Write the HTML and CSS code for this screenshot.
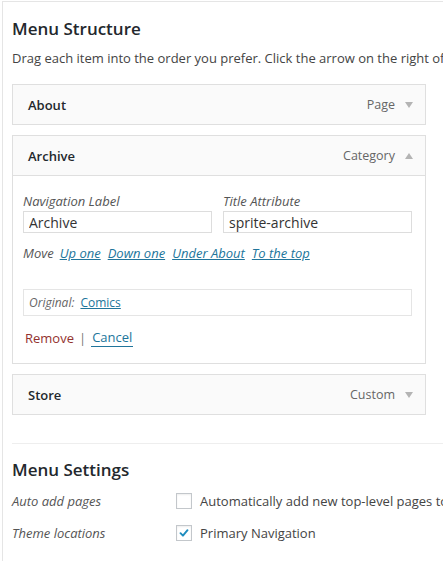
FILE: index.html
```html
<!DOCTYPE html>
<html>
<head>
<meta charset="utf-8">
<link rel="stylesheet" href="styles.css">
</head>
<body>
<div class="panel">
  <h2 class="title">Menu Structure</h2>
  <p class="desc">Drag each item into the order you prefer. Click the arrow on the right of</p>
  <ul class="menu">
    <li class="item">
      <div class="item-bar"><span class="item-title">About</span><span class="item-type">Page</span><span class="arrow down"></span></div>
    </li>
    <li class="item open">
      <div class="item-bar"><span class="item-title">Archive</span><span class="item-type">Category</span><span class="arrow up"></span></div>
      <div class="item-body">
        <div class="fields">
          <label class="field"><span class="label">Navigation Label</span><input class="input" type="text" value="Archive"></label>
          <label class="field"><span class="label">Title Attribute</span><input class="input" type="text" value="sprite-archive"></label>
        </div>
        <div class="move"><span class="move-label">Move</span><a class="link">Up one</a><a class="link">Down one</a><a class="link">Under About</a><a class="link">To the top</a></div>
        <div class="original"><span class="orig-label">Original:</span><a class="link">Comics</a></div>
        <div class="actions"><a class="remove">Remove</a><span class="sep">|</span><a class="cancel">Cancel</a></div>
      </div>
    </li>
    <li class="item">
      <div class="item-bar"><span class="item-title">Store</span><span class="item-type">Custom</span><span class="arrow down"></span></div>
    </li>
  </ul>
  <div class="settings">
    <h3 class="title">Menu Settings</h3>
    <div class="row"><span class="row-label">Auto add pages</span><span class="check"></span><span class="row-text">Automatically add new top-level pages to</span></div>
    <div class="row"><span class="row-label">Theme locations</span><span class="check checked"><svg viewBox="0 0 16 16" width="16" height="16"><path d="M4 8.2 L6.8 11 L12 4.8" fill="none" stroke="#1e8cbe" stroke-width="2.2" stroke-linecap="round" stroke-linejoin="round"/></svg></span><span class="row-text">Primary Navigation</span></div>
  </div>
</div>
</body>
</html>
```

FILE: styles.css
```css
html, body {
  margin: 0;
  padding: 0;
  background: #fff;
  overflow: hidden;
}
body {
  font-family: "Open Sans", "Liberation Sans", sans-serif;
  color: #444;
  font-size: 13px;
}
.panel {
  margin: 1px 0 0 2px;
  border-left: 1px solid #e5e5e5;
  border-top: 1px solid #e5e5e5;
  padding: 0 0 40px 9px;
  width: 700px;
}
.title {
  margin: 0;
  font-size: 17px;
  font-weight: 600;
  color: #23282d;
  line-height: 24px;
}
.panel > .title {
  padding-top: 15px;
}
.desc {
  margin: 7px 0 0;
  font-size: 13px;
  line-height: 20px;
  color: #444;
  white-space: nowrap;
}
.menu {
  list-style: none;
  margin: 16px 0 0;
  padding: 0;
  width: 414px;
  display: flex;
  flex-direction: column;
  gap: 10px;
}
.item {
  border: 1px solid #dfdfdf;
  background: #fafafa;
}
.item-bar {
  display: flex;
  align-items: center;
  height: 39px;
  padding: 0 12px 0 15px;
}
.item.open .item-bar {
  border-bottom: 1px solid #dfdfdf;
}
.item-title {
  font-weight: 600;
  color: #23282d;
  flex: 1;
}
.item-type {
  color: #666;
  font-size: 12.5px;
  margin-right: 10px;
}
.arrow {
  width: 0;
  height: 0;
  border-left: 4px solid transparent;
  border-right: 4px solid transparent;
}
.arrow.down {
  border-top: 6px solid #b4b4b4;
}
.arrow.up {
  border-bottom: 6px solid #b4b4b4;
}
.item-body {
  background: #fff;
  padding: 16px 13px 16px 10px;
}
.fields {
  display: grid;
  grid-template-columns: 189px 189px;
  column-gap: 11px;
}
.field {
  display: flex;
  flex-direction: column;
}
.label {
  font-style: italic;
  color: #555;
  line-height: 18px;
  margin-bottom: 1px;
}
.input {
  box-sizing: border-box;
  width: 189px;
  height: 22px;
  border: 1px solid #ddd;
  padding: 0 5px;
  font-family: "Open Sans", "Liberation Sans", sans-serif;
  font-size: 14px;
  color: #333;
  margin: 0;
}
.move {
  margin-top: 11px;
  line-height: 18px;
  display: flex;
  gap: 7px;
}
.move-label {
  font-style: italic;
  color: #555;
  margin-right: -1px;
}
.link {
  color: #21759b;
  text-decoration: underline;
  font-style: italic;
}
.original {
  margin-top: 27px;
  height: 27px;
  box-sizing: border-box;
  border: 1px solid #e5e5e5;
  padding: 0 5px;
  display: flex;
  align-items: center;
  gap: 6px;
  font-size: 12px;
}
.orig-label {
  font-style: italic;
  color: #666;
}
.original .link {
  font-style: normal;
}
.actions {
  margin-top: 13px;
  line-height: 18px;
  display: flex;
  align-items: center;
  padding-left: 2px;
  font-size: 13px;
}
.remove {
  color: #92312e;
}
.sep {
  color: #777;
  margin: 0 5px;
}
.cancel {
  color: #21759b;
  border-bottom: 1px solid #21759b;
  line-height: 17px;
  padding: 0 1px;
}
.settings {
  margin-top: 28px;
  border-top: 1px solid #eee;
  padding-top: 14px;
}
.row {
  display: flex;
  align-items: center;
  height: 32px;
}
.settings .title {
  margin-bottom: 3px;
}
.row-label {
  width: 164px;
  font-style: italic;
  color: #555;
}
.check {
  box-sizing: border-box;
  width: 16px;
  height: 16px;
  border: 1px solid #c3c7cb;
  background: #fff;
  margin-right: 8px;
  display: flex;
  align-items: center;
  justify-content: center;
  box-shadow: inset 0 1px 2px rgba(0,0,0,0.07);
}
.check svg {
  display: block;
  width: 14px;
  height: 14px;
}
.row-text {
  white-space: nowrap;
  color: #444;
}
```
